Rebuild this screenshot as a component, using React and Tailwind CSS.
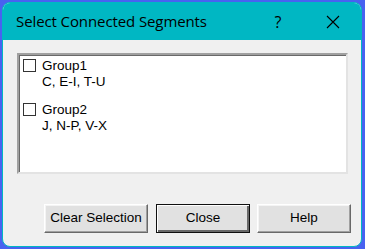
import React from "react";

const groups = [
  { name: "Group1", segs: "C, E-I, T-U" },
  { name: "Group2", segs: "J, N-P, V-X" },
];

function Btn({ label, def, w }) {
  return (
    <button
      className={
        "h-[29px] bg-[#e1e1e1] text-black text-[13.5px] flex items-center justify-center shrink-0 " +
        w +
        (def
          ? " border border-[#101010] shadow-[inset_1px_1px_0_#ffffff,inset_-2px_-2px_0_#696969]"
          : " border border-t-[#ffffff] border-l-[#ffffff] border-r-[#696969] border-b-[#696969] shadow-[inset_-1px_-1px_0_#a0a0a0,inset_1px_1px_0_#f4f4f4]")
      }
    >
      {label}
    </button>
  );
}

export default function App() {
  return (
    <div
      className="w-[365px] h-[249px] bg-[#4862f0] pl-[2px] pt-[2px]"
      style={{ fontFamily: '"Liberation Sans", Arial, sans-serif' }}
    >
      <div className="w-[360px] h-[245px] rounded-lg overflow-hidden border border-[#00b7c3] bg-[#f0f0f0] flex flex-col">
        {/* title bar */}
        <div
          className="h-[37px] bg-[#00b7c3] flex items-center pl-[13px] text-[15px] text-black shrink-0"
          style={{ fontFamily: '"Open Sans", "Noto Sans", sans-serif' }}
        >
          <span className="flex-1 tracking-[-0.1px]">Select Connected Segments</span>
          <span className="w-[20px] text-center mr-[38px] text-[16px]">?</span>
          <svg width="14" height="14" viewBox="0 0 14 14" className="mr-[21px]">
            <path d="M1 1 L13 13 M13 1 L1 13" stroke="#000" strokeWidth="1.1" fill="none" />
          </svg>
        </div>

        {/* body */}
        <div className="flex-1 flex flex-col pl-[14px] pr-[13px] pt-[13px]">
          <div className="w-[331px] h-[121px] bg-white border-2 border-t-[#a0a0a0] border-l-[#a0a0a0] border-r-[#e3e3e3] border-b-[#e3e3e3] shadow-[inset_1px_1px_0_#696969] pt-[3px] pl-[2px] flex flex-col gap-[12px]">
            {groups.map((g) => (
              <div key={g.name} className="flex items-start gap-[6px] pl-[2px]">
                <div className="w-[13px] h-[13px] mt-[1px] border border-[#333333] bg-white shrink-0" />
                <div className="text-[13.5px] leading-[16px] text-black">
                  <div>{g.name}</div>
                  <div>{g.segs}</div>
                </div>
              </div>
            ))}
          </div>

          <div className="flex mt-[30px] pl-[27px]">
            <Btn label="Clear Selection" w="w-[104px]" />
            <Btn label="Close" def w="w-[94px] ml-[8px]" />
            <Btn label="Help" w="w-[94px] ml-[7px]" />
          </div>
        </div>
      </div>
    </div>
  );
}
